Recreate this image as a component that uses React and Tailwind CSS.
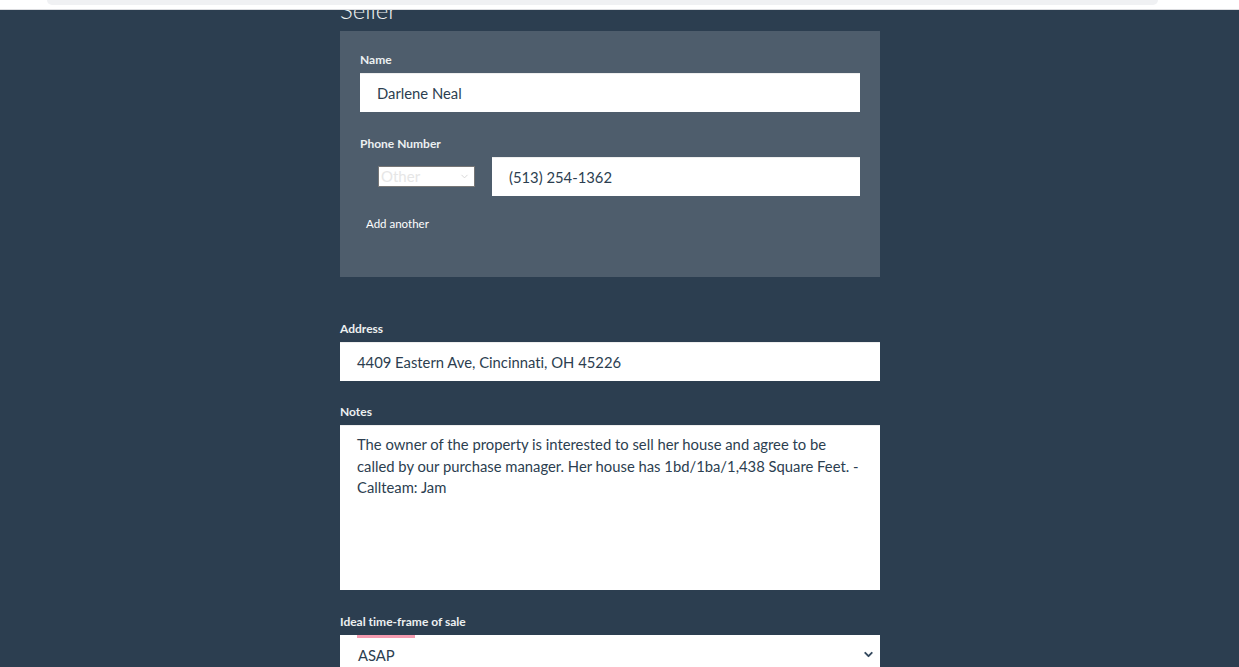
import { ChevronDown } from 'lucide-react'

const font = { fontFamily: 'Lato, "Open Sans", sans-serif' }

function Label({ children, className = '' }) {
  return <div className={`text-[12px] font-bold leading-4 text-[#ecf0f1] ${className}`}>{children}</div>
}

function Field({ value, className = '' }) {
  return (
    <div className={`flex h-[39px] items-center border-t border-[#eeeeee] bg-white pl-[17px] text-[14.8px] text-[#2c3e50] ${className}`}>
      {value}
    </div>
  )
}

export default function App() {
  return (
    <div className="relative min-h-screen overflow-hidden bg-[#2c3e50] [font-variant-ligatures:none]" style={font}>
      {/* browser bar strip over the top */}
      <div className="absolute inset-x-0 top-0 z-10 h-[10px] border-b border-[#dcdde0] bg-white">
        <div className="ml-[47px] h-[5px] w-[1111px] rounded-b-[8px] bg-[#f0f1f3]" />
      </div>

      <div className="ml-[340px] w-[540px] pb-10">
        <h2 className="-mt-[4px] text-[24px] font-light leading-[28px] text-[#ecf0f1]">Seller</h2>

        <div className="mt-[7px] h-[246px] bg-[#4e5d6c] p-5">
          <Label className="pt-px">Name</Label>
          <Field value="Darlene Neal" className="mt-[5px]" />

          <Label className="mt-[24px]">Phone Number</Label>
          <div className="mt-[5px] flex items-center">
            <div className="ml-[18px] flex h-[21px] w-[97px] items-center justify-between border border-[#767676] bg-white pl-[2px] pr-[4px] text-[15px] leading-none text-[#e6e6e6]">
              <span>Other</span>
              <ChevronDown className="h-[11px] w-[11px] text-[#d4d4d4]" strokeWidth={2} />
            </div>
            <Field value="(513) 254-1362" className="ml-[17px] flex-1" />
          </div>

          <div className="ml-[6px] mt-[20px] text-[11.5px] leading-4 text-white">Add another</div>
        </div>

        <Label className="mt-[44px]">Address</Label>
        <Field value="4409 Eastern Ave, Cincinnati, OH 45226" className="mt-[5px]" />

        <Label className="mt-[23px]">Notes</Label>
        <div className="mt-[5px] h-[165px] whitespace-nowrap border-t border-[#eeeeee] bg-white pl-[17px] pr-[17px] pt-[8px] text-[14.8px] leading-[21.5px] text-[#2c3e50]">
          <div>The owner of the property is interested to sell her house and agree to be</div>
          <div>called by our purchase manager. Her house has 1bd/1ba/1,438 Square Feet. -</div>
          <div>Callteam: Jam</div>
        </div>

        <Label className="mt-[24px]">Ideal time-frame of sale</Label>
        <div className="relative mt-[5px] flex h-[39px] items-center justify-between bg-white pl-[18px] pr-[5px] text-[14.8px] text-[#2c3e50]">
          <div className="absolute left-[17px] top-0 h-[3px] w-[58px] bg-[#f49bb0]" />
          <span className="pt-[2px]">ASAP</span>
          <ChevronDown className="h-[13px] w-[13px] text-[#34495e]" strokeWidth={3.5} />
        </div>
      </div>
    </div>
  )
}
